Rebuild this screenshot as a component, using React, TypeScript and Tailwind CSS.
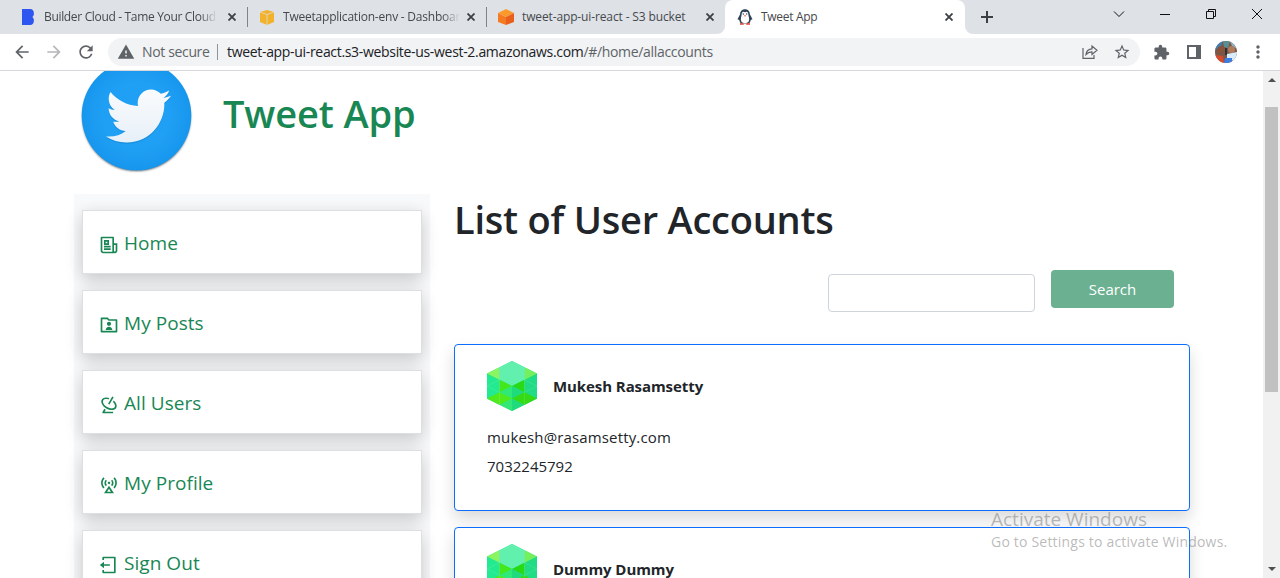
import React from "react";
import { FaTwitter } from "react-icons/fa";
import { RiNewspaperLine, RiFolderUserLine, RiRadarLine, RiBaseStationLine, RiLogoutBoxLine } from "react-icons/ri";
import { MdStarBorder, MdExtension, MdArrowBack, MdArrowForward, MdRefresh, MdWarning, MdMoreVert } from "react-icons/md";

const menu = [
  { label: "Home", Icon: RiNewspaperLine },
  { label: "My Posts", Icon: RiFolderUserLine },
  { label: "All Users", Icon: RiRadarLine },
  { label: "My Profile", Icon: RiBaseStationLine },
  { label: "Sign Out", Icon: RiLogoutBoxLine },
];

const users = [
  { name: "Mukesh Rasamsetty", email: "mukesh@rasamsetty.com", phone: "7032245792" },
  { name: "Dummy Dummy", email: "", phone: "" },
];

function CloseX() {
  return (
    <svg width="8" height="8" viewBox="0 0 8 8" className="shrink-0">
      <path d="M0.5 0.5 7.5 7.5M7.5 0.5 0.5 7.5" stroke="#3c4043" strokeWidth="1.8" />
    </svg>
  );
}

function CubeAvatar() {
  return (
    <svg width="50" height="50" viewBox="0 0 50 50" className="block shrink-0">
      <path d="M25 0 50 12.5V37.5L25 50 0 37.5V12.5Z" fill="#2be07c" />
      <path d="M0 12.5 12.5 18.75V43.75L0 37.5Z" fill="#22ea90" />
      <path d="M50 12.5 37.5 18.75V43.75L50 37.5Z" fill="#20dc85" />
      <path d="M0 12.5 12.5 6.25V18.75Z" fill="#8af560" />
      <path d="M50 12.5 37.5 6.25V18.75Z" fill="#74f05e" />
      <path d="M25 0 37.5 6.25V18.75L25 25 12.5 18.75V6.25Z" fill="#62f0ae" />
      <path d="M12.5 18.75 25 25 12.5 31.25Z" fill="#42e81c" />
      <path d="M37.5 18.75 25 25 37.5 31.25Z" fill="#28d916" />
      <path d="M12.5 31.25 25 25V37.5Z" fill="#2ee877" />
      <path d="M37.5 31.25 25 25V37.5Z" fill="#1fdb7c" />
      <path d="M12.5 43.75 25 37.5V50Z" fill="#34e878" />
      <path d="M37.5 43.75 25 37.5V50Z" fill="#1fdb7c" />
      <path d="M0 37.5 12.5 31.25V43.75ZM12.5 31.25 25 37.5 12.5 43.75Z" fill="#50ea1c" />
      <path d="M50 37.5 37.5 31.25V43.75ZM37.5 31.25 25 37.5 37.5 43.75Z" fill="#34da16" />
      <path d="M12.5 6.25V43.75M37.5 6.25V43.75M0 25 12.5 18.75M0 25 12.5 31.25M50 25 37.5 18.75M50 25 37.5 31.25" stroke="#ffffff" strokeOpacity=".2" strokeWidth=".6" fill="none" />
    </svg>
  );
}

function PenguinIcon() {
  return (
    <svg width="16" height="16" viewBox="0 0 16 16">
      <path d="M8 .2C4.800 .2 3.200 2.400 3.100 5.200L.5 10.200 2.300 11Q2.500 13 4 14.500H12Q13.500 13 13.700 11L15.500 10.200 12.900 5.200C12.800 2.400 11.200 .2 8 .2Z" fill="#2f4256" />
      <path d="M8 3.200Q4.600 1.800 4.600 5.500 4.600 6.800 4 8.500 3 14.200 8 14.200 13 14.200 12 8.500 11.400 6.800 11.400 5.500 11.400 1.800 8 3.200Z" fill="#fff" />
      <circle cx="6.300" cy="5" r=".7" fill="#2f4256" />
      <circle cx="9.700" cy="5" r=".7" fill="#2f4256" />
      <path d="M7 6.300H9L8 8Z" fill="#e84c3d" />
      <path d="M3 15.200Q4 13.200 6.500 15.200ZM9.500 15.200Q12 13.200 13 15.200Z" fill="#e84c3d" stroke="#e84c3d" />
    </svg>
  );
}

function ProfilePhoto() {
  return (
    <svg width="22" height="22" viewBox="0 0 22 22" className="block">
      <clipPath id="photo"><circle cx="11" cy="11" r="11" /></clipPath>
      <g clipPath="url(#photo)">
        <rect width="22" height="22" fill="#7a5848" />
        <path d="M0 0H8L6 5 0 9Z" fill="#3f7fb4" />
        <path d="M8 0H15L13 7 9 6Z" fill="#5a8f94" />
        <path d="M15 0H22V8L17 5Z" fill="#8fb4c8" />
        <circle cx="6" cy="8.500" r="3.500" fill="#8a5238" />
        <circle cx="16.500" cy="8.500" r="3.500" fill="#b07a5c" />
        <path d="M10 7H12V14H10Z" fill="#2e3038" />
        <path d="M0 14 8 15 9 22H0Z" fill="#d84a2c" />
        <path d="M12 13 22 11V20L12 19Z" fill="#d9ecfb" />
        <path d="M10 17 17 17V22H9Z" fill="#3b7de0" />
      </g>
    </svg>
  );
}

export default function App() {
  return (
    <div className="relative flex h-[578px] w-[1280px] flex-col overflow-hidden bg-white font-['Open_Sans','Noto_Sans',sans-serif] text-[#212529]">
      <header className="h-[71px] shrink-0 border-b border-[#d5d7da] bg-white">
        <div className="flex h-[34px] text-[12px] tracking-[-0.3px] text-[#45494d]">
          <div className="flex w-[725px] rounded-br-lg bg-[#dee1e6]">
            <div className="flex w-[247px] items-center pl-5">
              <svg width="16" height="16" viewBox="0 0 16 16"><path d="M2 0H11Q14.500 1 13.800 6L12.500 8 13.800 10Q14.500 15 11 16H2Z" fill="#2f55f0" /></svg>
              <span className="ml-2 w-[173px] overflow-hidden mask-r-from-90% whitespace-nowrap tracking-[-0.33px]">Builder Cloud - Tame Your Cloud</span>
              <span className="ml-[11px] flex"><CloseX /></span>
            </div>
            <div className="flex w-[239px] items-center">
              <div className="h-5 w-px bg-[#808388]" />
              <svg width="16" height="16" viewBox="0 0 16 16" className="ml-[11px]"><path d="M1 3 8 1 15 3V13L8 16 1 13Z" fill="#f2b22c" /><path d="M1 3 8 5.500 15 3M8 5.500V16" stroke="#dee1e6" fill="none" strokeWidth=".7" /></svg>
              <span className="ml-2 w-[177px] overflow-hidden mask-r-from-90% whitespace-nowrap tracking-[-0.22px]">Tweetapplication-env - Dashboar</span>
              <span className="ml-[7px] flex"><CloseX /></span>
            </div>
            <div className="flex w-[239px] items-center">
              <div className="h-5 w-px bg-[#808388]" />
              <svg width="16" height="16" viewBox="0 0 16 16" className="ml-[11px]"><path d="M0 4 8 0 16 4 8 8Z" fill="#fb9a2c" /><path d="M0 4 8 8V16L0 13Z" fill="#f47b20" /><path d="M16 4 8 8V16L16 13Z" fill="#e8601c" /></svg>
              <span className="ml-2 w-[175px] whitespace-nowrap tracking-[-0.13px]">tweet-app-ui-react - S3 bucket</span>
              <span className="ml-[9px] flex"><CloseX /></span>
            </div>
          </div>
          <div className="w-[240px] bg-linear-to-b from-[#dee1e6] from-50% to-white to-50%">
            <div className="flex h-full items-center rounded-t-lg bg-white pl-3">
              <PenguinIcon />
              <span className="ml-2 w-[175px] whitespace-nowrap">Tweet App</span>
              <span className="ml-[9px] flex"><CloseX /></span>
            </div>
          </div>
          <div className="w-[315px] rounded-bl-lg bg-[#dee1e6]">
            <svg width="315" height="34" viewBox="965 0 315 34" fill="none" stroke="#111"><path d="M981 17H993M987 11V23" stroke="#3c4043" strokeWidth="2" /><path d="M1114 11.500 1119 16.500 1124 11.500M1160 14.500H1170M1206.500 11.500H1213.500V18.500H1206.500ZM1208.500 11V9.500H1215.500V16.500H1214M1252 9 1262 19M1262 9 1252 19" /></svg>
          </div>
        </div>
        <div className="flex h-9 items-center text-[#5f6368]">
          <MdArrowBack className="ml-3 size-5" />
          <MdArrowForward className="ml-3 size-5 text-[#b5b7ba]" />
          <MdRefresh className="ml-3 size-5" />
          <div className="ml-3 flex h-7 w-[1032px] items-center rounded-full bg-[#f1f3f4] text-[14px] leading-5 whitespace-nowrap">
            <MdWarning className="ml-[9px] size-[18px]" />
            <span className="ml-[7px] w-[68px] pb-px tracking-[-0.35px]">Not secure</span>
            <div className="ml-[7px] h-4 w-px bg-[#909397]" />
            <span className="ml-[9px] w-[855px] pb-px tracking-[-0.32px]"><span className="text-[#202124]">tweet-app-ui-react.s3-website-us-west-2.amazonaws.com</span>/#/home/allaccounts</span>
            <svg width="16" height="16" viewBox="0 0 16 16" fill="none" stroke="#5f6368" strokeWidth="1.200"><path d="M1 4V14.400H12V11M4 10.500Q4.500 5 10 4.800V2L15 6.300 10 10.500V7.800Q6.500 7.600 4 10.500Z" /></svg>
            <MdStarBorder className="ml-[15px] size-[18px]" />
          </div>
          <MdExtension className="ml-[13px] size-[17px]" />
          <svg width="14" height="14" viewBox="0 0 14 14" className="ml-[17px]"><path d="M0 0H14V14H0ZM2 2V12H9V2Z" fill="#5f6368" fillRule="evenodd" /></svg>
          <span className="ml-[14px]"><ProfilePhoto /></span>
          <MdMoreVert className="ml-[11px] size-5" />
        </div>
      </header>
      <div className="flex min-h-0 flex-1">
        <main className="flex w-[1263px] flex-col overflow-hidden pl-[74px]">
          <div className="flex h-[123px] shrink-0">
            <svg width="126" height="110" viewBox="74 71 126 110">
              <defs>
                <linearGradient id="bird" x1="0" y1="0" x2="0" y2="1"><stop offset="0" stopColor="#fafbfd" /><stop offset="1" stopColor="#e6f0f8" /></linearGradient>
                <radialGradient id="disc"><stop offset=".6" stopColor="#20a0f4" /><stop offset="1" stopColor="#1796ee" /></radialGradient>
                <filter id="soft"><feGaussianBlur stdDeviation="1.300" /></filter>
              </defs>
              <circle cx="136.500" cy="117" r="54" fill="#4a5a68" filter="url(#soft)" />
              <circle cx="136.500" cy="115.500" r="54.800" fill="url(#disc)" />
              <g transform="translate(106 83.500)">
                <FaTwitter size={65} y="1.500" fill="#0f78c4" opacity=".35" />
                <FaTwitter size={65} fill="url(#bird)" />
              </g>
            </svg>
            <h1 className="mt-3 ml-[23px] text-[38px] leading-[60px] font-semibold tracking-[-0.1px] whitespace-nowrap text-[#198754]">Tweet App</h1>
          </div>
          <div className="flex min-h-0 flex-1">
            <nav className="h-[500px] w-[356px] bg-[#f8f9fa] px-2 pt-4">
              {menu.map(({ label, Icon }) => (
                <a key={label} className="mb-4 flex h-16 items-center border border-[#dedfe0] bg-white pt-1.5 pl-4 text-[19px] text-[#198754] shadow-[0_8px_16px_rgba(0,0,0,0.15),0_0_16px_rgba(0,0,0,0.06)]">
                  <Icon className="size-5" />
                  <span className="ml-[5px] pb-1 tracking-[0.05px]">{label}</span>
                </a>
              ))}
            </nav>
            <section className="ml-6 w-[736px]">
              <h1 className="h-[52px] text-[38px] leading-[50px] font-semibold tracking-[-0.22px] whitespace-nowrap">List of User Accounts</h1>
              <div className="mt-6 flex justify-end pr-4">
                <div className="mt-1 h-[38px] w-[207px] rounded border border-[#ced4da]" />
                <button className="ml-4 h-[38px] w-[123px] rounded bg-[#6bb191] text-[15px] text-white">Search</button>
              </div>
              <div className="mt-8">
                {users.map((u) => (
                  <article key={u.name} className="mb-4 h-[167px] rounded border border-[#0d6efd] bg-white pt-4 pl-8 shadow-[0_8px_16px_rgba(0,0,0,0.15)]">
                    <div className="flex items-center">
                      <CubeAvatar />
                      <b className="ml-4 text-[15px] tracking-[-0.08px]">{u.name}</b>
                    </div>
                    <p className="mt-[14px] text-[15px] leading-6 font-medium tracking-[0.15px]">{u.email}</p>
                    <p className="mt-[5px] text-[15px] leading-6">{u.phone}</p>
                  </article>
                ))}
              </div>
            </section>
          </div>
        </main>
        <div className="flex w-[17px] flex-col items-center justify-between bg-[#f1f1f1] py-[7px]">
          <svg width="8" height="4" viewBox="0 0 8 4"><path d="M0 4 4 0 8 4Z" fill="#505050" /></svg>
          <div className="mt-[25px] mb-auto h-[285px] w-[13px] bg-[#c1c1c1]" />
          <svg width="8" height="4" viewBox="0 0 8 4"><path d="M0 0 4 4 8 0Z" fill="#505050" /></svg>
        </div>
      </div>
      <div className="absolute top-[507px] left-[991px] whitespace-nowrap text-[#808080]/55">
        <div className="text-[19px] leading-6">Activate Windows</div>
        <div className="text-[14px] leading-[22px] tracking-[0.2px]">Go to Settings to activate Windows.</div>
      </div>
    </div>
  );
}
